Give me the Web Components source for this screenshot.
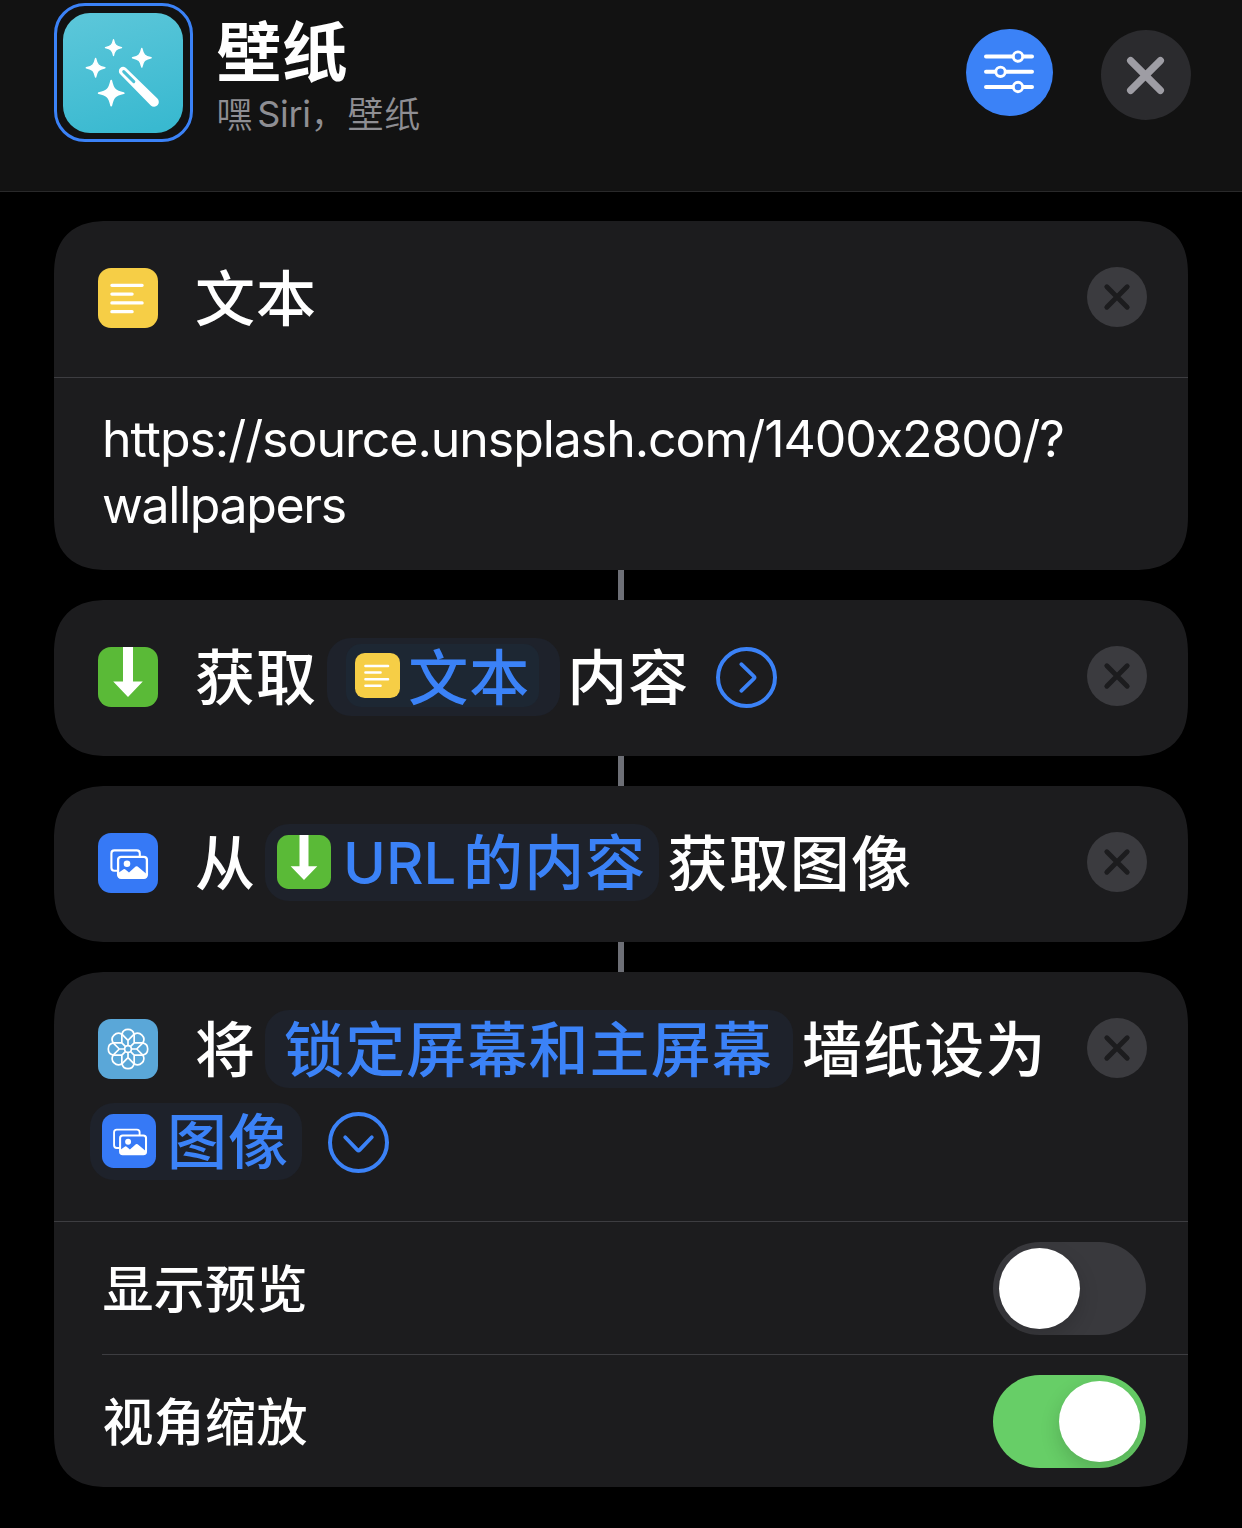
<!DOCTYPE html>
<html lang="zh-CN">
<head>
<meta charset="utf-8">
<title>壁纸</title>
<style>
html,body{margin:0;background:#000;color:#fff;font-family:Inter,"Noto Sans CJK SC",sans-serif}
body{width:1242px;height:1528px;overflow:hidden}
</style>
</head>
<body>
<shortcut-editor></shortcut-editor>
<script>
const define = (name, html, hook) => {
  const t = document.createElement('template');
  t.innerHTML = html;
  customElements.define(name, class extends HTMLElement {
    connectedCallback() {
      if (this.shadowRoot) return;
      this.attachShadow({mode: 'open'}).append(t.content.cloneNode(true));
      if (hook) hook(this, this.shadowRoot);
    }
  });
};

/* Action glyphs on a 60 x 60 grid */
const petals = Array.from({length: 8}, (_, i) =>
  `<g transform="rotate(${i * 45} 30 30)"><path d="M30 26.6V21.3L23.9 15.2A6.25 6.25 0 0 1 36.1 15.2L30 21.3"/></g>`).join('');
const glyphs = {
  text: ['#f6ce46', '<path d="M13.9 17.3H44.1M13.9 26.1H34.1M13.9 34.9H44.1M13.9 43.7H34.1" stroke="#fff" stroke-width="3.3" stroke-linecap="round"/>'],
  download: ['#5aba37', '<path d="M25 0H35V34.6H44.8L30 50L15.2 34.6H25Z" fill="#fff"/>'],
  photos: ['#3679f6', '<rect x="13.4" y="17.4" width="28.4" height="20.4" rx="3" fill="none" stroke="#fff" stroke-width="2.1"/><rect x="20.1" y="23.8" width="28.8" height="21" rx="3" fill="#3679f6" stroke="#fff" stroke-width="2.3"/><circle cx="29" cy="30.8" r="3.3" fill="#fff"/><path d="M20.5 39.8L25.6 36.2Q26.5 35.6 27.4 36.4L31 39.5L37.6 33.6Q38.6 32.8 39.6 33.6L48.6 41V43.5Q48.6 45 47 45H22Q20.5 45 20.5 43Z" fill="#fff"/>'],
  wallpaper: ['#5aa7d8', `<g fill="none" stroke="#fff" stroke-width="1.7"><circle cx="30" cy="30" r="3.4"/>${petals}</g>`]
};
define('action-icon', `<style>:host{display:block;flex:none;width:var(--size,60px);height:var(--size,60px)}svg{display:block;width:100%;height:100%}</style><svg viewBox="0 0 60 60" fill="none"></svg>`, (el, r) => {
  const [bg, art] = glyphs[el.getAttribute('name')];
  r.querySelector('svg').innerHTML = `<rect width="60" height="60" rx="13" fill="${bg}"/>${art}`;
});

define('round-x', `<style>:host{display:block;flex:none;width:60px;height:60px}svg{display:block}</style>
<svg width="60" height="60"><circle cx="30" cy="30" r="30" fill="#3b3b3f"/><path d="M19.8 19.8L40.2 40.2M40.2 19.8L19.8 40.2" stroke="#1c1c1e" stroke-width="4.9" stroke-linecap="round"/></svg>`);

define('disclosure-ring', `<style>:host{display:block;flex:none;width:61px;height:61px}svg{display:block}:host([open]) path{transform:rotate(90deg);transform-origin:30.5px 30.5px}</style>
<svg width="61" height="61" fill="none" stroke="#3b82f7"><circle cx="30.5" cy="30.5" r="28.5" stroke-width="4"/><path d="M25.3 17.2L37.9 29.3Q39.1 30.5 37.9 31.7L25.3 43.8" stroke-width="3.8" stroke-linecap="round" stroke-linejoin="round"/></svg>`);

define('action-label', `<style>:host{display:block;flex:none;white-space:pre;font-size:60px;line-height:60px;letter-spacing:1.1px;font-weight:500;font-family:"Noto Sans CJK SC",sans-serif;height:60px}
:host([latin]){font:460 58px/60px Inter,sans-serif;letter-spacing:-.1px}</style><slot></slot>`);

define('variable-chip', `<style>:host{display:flex;align-items:center;flex:none;box-sizing:border-box;height:78px;border-radius:24px;background:#1e222b;color:#3b82f7;--size:54px}
:host([short]){height:77px;margin-bottom:1px!important}
.in{display:flex;align-items:center;height:100%;box-sizing:border-box}
:host([nested]) .in{--size:45px;height:63px;width:193px;margin:-3px 0 0 19px;padding-left:9px;border-radius:15px;background:#1d2733}</style><div class="in"><slot></slot></div>`);

define('toggle-switch', `<style>:host{display:flex;flex:none;box-sizing:border-box;width:153px;height:93px;padding:6px;border-radius:47px;background:#39393d;overflow:hidden}
i{width:81px;height:81px;border-radius:50%;background:#fff;box-shadow:0 8px 20px rgba(0,0,0,.16)}
:host([on]){background:#67ce67;justify-content:flex-end}</style><i></i>`);

define('setting-row', `<style>:host{display:flex;align-items:center;justify-content:space-between;height:132px;margin-left:48px;padding-right:42px;font:500 51px/60px "Noto Sans CJK SC",sans-serif;letter-spacing:.3px}
:host([divided]){border-bottom:1px solid #3d3d41}span{padding:0 0 4px .5px}</style><span><slot></slot></span><toggle-switch></toggle-switch>`, (el, r) => {
  if (el.hasAttribute('on')) r.querySelector('toggle-switch').setAttribute('on', '');
});

define('action-line', `<style>:host{display:flex;align-items:center;height:78px}</style><slot></slot>`);

define('action-card', `<style>:host{display:block;background:#1c1c1e;border-radius:45px;overflow:hidden}
@supports (corner-shape:superellipse(1.3)){:host{border-radius:54px;corner-shape:superellipse(1.3)}}
header{display:flex;align-items:flex-start;justify-content:space-between;padding:38px 41px 40px 36px}
.lines{display:flex;flex-direction:column;gap:15px}round-x{margin-top:8px}
.body{border-top:1px solid #3d3d41}:host([plain]) .body{display:none}</style>
<header><div class="lines"><slot name="line"></slot></div><round-x></round-x></header><div class="body"><slot></slot></div>`);

define('text-value', `<style>:host{display:block;height:192px;box-sizing:border-box;padding:28px 48px;font:400 50px/66px Inter,sans-serif;letter-spacing:-1.05px}::slotted(.tail){letter-spacing:-1.35px}</style><slot></slot>`);

define('flow-link', `<style>:host{display:block;width:6px;height:30px;margin:0 auto;background:#6d6f76}</style>`);

define('shortcut-icon', `<style>:host{display:block;box-sizing:border-box;width:139px;height:139px;border:3px solid #3b82f7;border-radius:31px;padding:7px 6px}svg{display:block}</style>
<svg width="120" height="120" viewBox="0 0 120 120"><defs><linearGradient id="g" x1=".35" y1="0" x2=".65" y2="1"><stop offset="0" stop-color="#5ac6d9"/><stop offset="1" stop-color="#39b9d0"/></linearGradient>
<path id="s" d="M0-.93C.14-.28.28-.14.93 0C.28.14.14.28 0 .93C-.14.28-.28.14-.93 0C-.28-.14-.14-.28 0-.93Z" fill="#fff" stroke="#fff" stroke-width=".14" stroke-linejoin="round"/></defs>
<rect width="120" height="120" rx="27" fill="url(#g)"/>
<use href="#s" transform="translate(50.5 34.6) scale(8.7)"/><use href="#s" transform="translate(78.8 44.8) scale(10)"/><use href="#s" transform="translate(32.6 54.8) scale(10)"/><use href="#s" transform="translate(48.2 80.2) scale(13.4)"/>
<path d="M57 61A4.2 4.2 0 0 1 63.3 55.2L94.4 85.6A4.7 4.7 0 0 1 87.8 92.4Z" fill="#fff"/><path d="M60.7 58.6L70.8 68.6" stroke="#4bc0d5" stroke-width="3" stroke-linecap="round"/></svg>`);

define('editor-header', `<style>:host{display:flex;align-items:flex-start;box-sizing:border-box;height:192px;background:#121212;border-bottom:1px solid #29292a;padding:3px 51px 0 54px}
.names{flex:1;padding:13px 0 0 23.5px}.title{font:700 65px/64px "Noto Sans CJK SC",sans-serif;letter-spacing:.8px}
.sub{display:flex;font:350 36px/40px "Noto Sans CJK SC",sans-serif;letter-spacing:.8px;color:#8e8e93;margin-top:12px}
.latin{font:400 36px/42px Inter,sans-serif;margin:1px 0 0 4px;letter-spacing:-.3px}svg{display:block}.a{margin:26px 48px 0 0}.b{margin-top:27px}</style>
<shortcut-icon></shortcut-icon>
<div class="names"><div class="title">壁纸</div><div class="sub"><span>嘿</span><span class="latin">Siri</span><span>，壁纸</span></div></div>
<svg class="a" width="87" height="87"><circle cx="43.5" cy="43.5" r="43.5" fill="#3b82f7"/><g stroke="#fff" stroke-width="4" stroke-linecap="round" fill="#3b82f7"><path d="M20 27.6H66M20 42.8H66M20 58H66"/><g stroke-width="2.9"><circle cx="52" cy="27.6" r="4.7"/><circle cx="34.5" cy="42.8" r="4.7"/><circle cx="52" cy="58" r="4.7"/></g></g></svg>
<svg class="b" width="90" height="90"><circle cx="45" cy="45" r="45" fill="#2b2b2e"/><path d="M29.6 30.6L59.4 60.4M59.4 30.6L29.6 60.4" stroke="#9e9da4" stroke-width="7.2" stroke-linecap="round"/></svg>`);

define('shortcut-editor', `<style>:host{display:flex;flex-direction:column;height:1528px;background:#000}main{padding:29px 54px 0}
action-line>action-icon{margin:0 37px 0 8px}action-label{position:relative;top:-3px}action-label[latin]{top:0}variable-chip[nested] action-label{top:-1.5px}variable-chip[short] action-icon{margin-top:-1px}variable-chip[short] action-label:not([latin]){top:-4px}</style>
<editor-header></editor-header>
<main>
<action-card><action-line slot="line"><action-icon name="text"></action-icon><action-label>文本</action-label></action-line><text-value>https://source.unsplash.com/1400x2800/?<br><span class="tail">wallpapers</span></text-value></action-card>
<flow-link></flow-link>
<action-card plain><action-line slot="line"><action-icon name="download"></action-icon><action-label>获取</action-label><variable-chip nested style="width:233px;margin:0 7px 0 10px"><action-icon name="text"></action-icon><action-label style="margin-left:8px">文本</action-label></variable-chip><action-label>内容</action-label><disclosure-ring style="margin-left:27px"></disclosure-ring></action-line></action-card>
<flow-link></flow-link>
<action-card plain><action-line slot="line"><action-icon name="photos"></action-icon><action-label>从</action-label><variable-chip short style="width:394px;margin:0 8.5px 0 9px;padding-left:12px"><action-icon name="download"></action-icon><action-label latin style="margin-left:12px;width:120px">URL</action-label><action-label>的内容</action-label></variable-chip><action-label>获取图像</action-label></action-line></action-card>
<flow-link></flow-link>
<action-card><action-line slot="line"><action-icon name="wallpaper"></action-icon><action-label>将</action-label><variable-chip style="width:528px;margin:0 9px;padding-left:19px"><action-label>锁定屏幕和主屏幕</action-label></variable-chip><action-label>墙纸设为</action-label></action-line>
<action-line slot="line"><variable-chip short style="width:212px;padding-left:12px"><action-icon name="photos"></action-icon><action-label style="margin-left:11px">图像</action-label></variable-chip><disclosure-ring open style="margin-left:26px"></disclosure-ring></action-line>
<setting-row divided>显示预览</setting-row><setting-row on>视角缩放</setting-row></action-card>
</main>`);
</script>
</body>
</html>
